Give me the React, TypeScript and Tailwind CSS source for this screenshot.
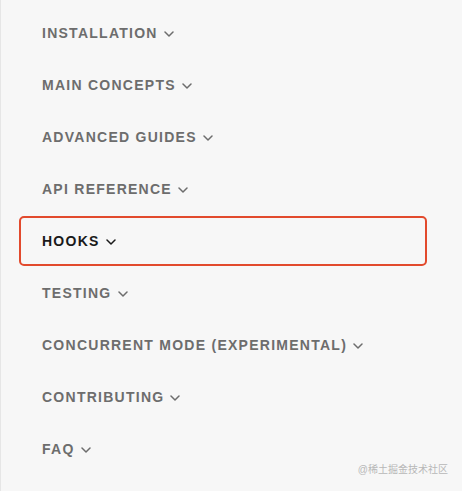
import React from 'react';

const sections = [
  'Installation',
  'Main Concepts',
  'Advanced Guides',
  'API Reference',
  'Hooks',
  'Testing',
  'Concurrent Mode (Experimental)',
  'Contributing',
  'FAQ',
];

function Chevron() {
  return (
    <svg width="10" height="6" viewBox="0 0 10 6" className="ml-[6px] mt-[1px]" fill="none">
      <path d="M1 1l4 4 4-4" stroke="currentColor" strokeWidth="1.5" strokeLinecap="round" strokeLinejoin="round" />
    </svg>
  );
}

function NavItem({ label, active }: { label: string; active?: boolean }) {
  const text = (
    <span className="flex items-center">
      <span className="uppercase font-bold text-[14px] tracking-[0.09em]">{label}</span>
      <Chevron />
    </span>
  );

  if (active) {
    return (
      <div className="h-[52px] flex items-center">
        <div className="ml-[18px] w-[408px] h-[50px] flex items-center pl-[21px] border-2 border-[#e24a2d] rounded-[5px] text-[#1a1a1a]">
          {text}
        </div>
      </div>
    );
  }

  return <div className="h-[52px] flex items-center pl-[41px] text-[#6d6d6d]">{text}</div>;
}

export default function App() {
  return (
    <div
      className="relative w-[462px] h-[491px] bg-[#f7f7f7] border-l border-[#e6e6e6] overflow-hidden"
      style={{ fontFamily: '"Liberation Sans", Arial, sans-serif' }}
    >
      <nav className="pt-[7px]">
        {sections.map(s => (
          <NavItem key={s} label={s} active={s === 'Hooks'} />
        ))}
      </nav>
      <div
        className="absolute right-[14px] bottom-[14px] text-[10px] text-[#b8b8b8]"
        style={{ fontFamily: '"Liberation Sans", "Noto Sans CJK SC", sans-serif' }}
      >
        @稀土掘金技术社区
      </div>
    </div>
  );
}
